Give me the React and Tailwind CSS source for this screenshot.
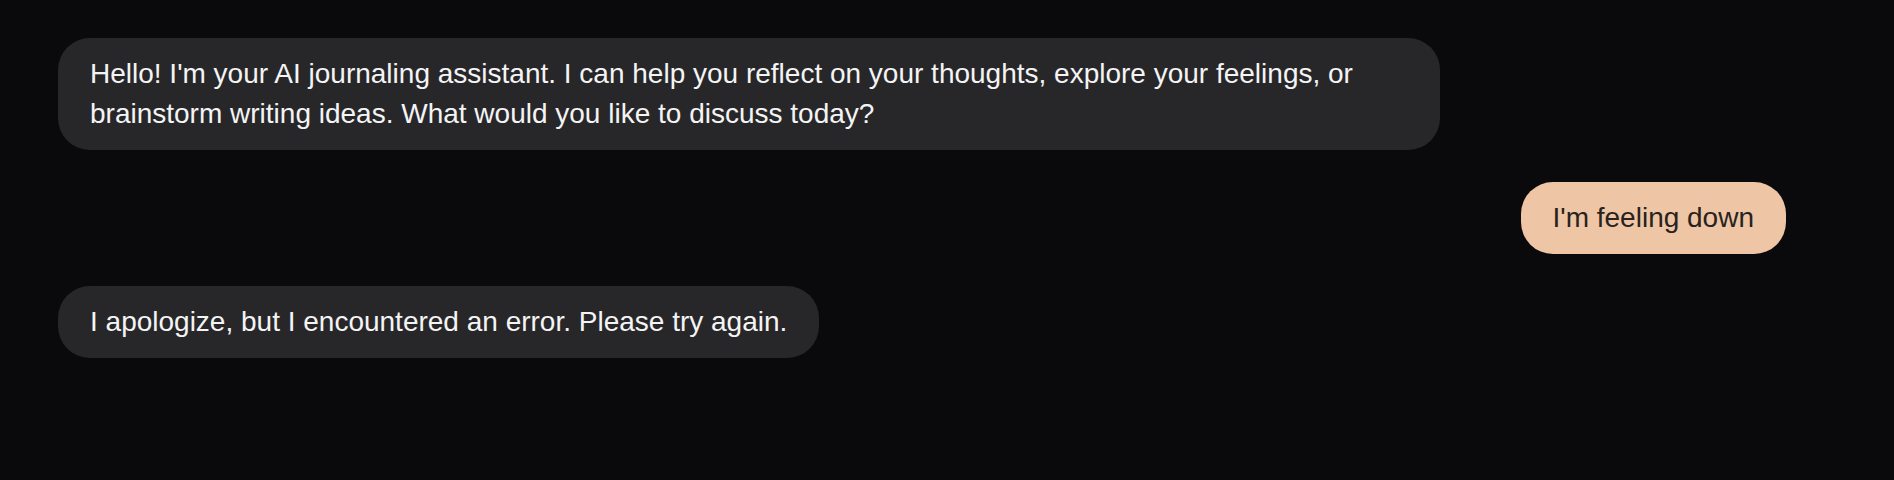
const messages = [
  {
    id: 1,
    role: 'assistant',
    text: "Hello! I'm your AI journaling assistant. I can help you reflect on your thoughts, explore your feelings, or brainstorm writing ideas. What would you like to discuss today?",
  },
  { id: 2, role: 'user', text: "I'm feeling down" },
  { id: 3, role: 'assistant', text: 'I apologize, but I encountered an error. Please try again.' },
];

const App = () => {
  return (
    <div className="min-h-screen bg-[#0a0a0c] font-['Liberation_Sans',Arial,sans-serif]">
      <div className="flex flex-col gap-8 pl-[58px] pr-[108px] pt-[38px]">
        {messages.map((m) => (
          <div key={m.id} className={`flex ${m.role === 'user' ? 'justify-end' : 'justify-start'}`}>
            <div
              className={`max-w-[80%] rounded-[32px] px-8 py-4 text-[28px] leading-[40px] ${
                m.role === 'user' ? 'bg-[#eec6a6] text-[#29221d]' : 'bg-[#27272a] text-[#f4f4f5]'
              }`}
            >
              {m.text}
            </div>
          </div>
        ))}
      </div>
    </div>
  );
};

export default App;
